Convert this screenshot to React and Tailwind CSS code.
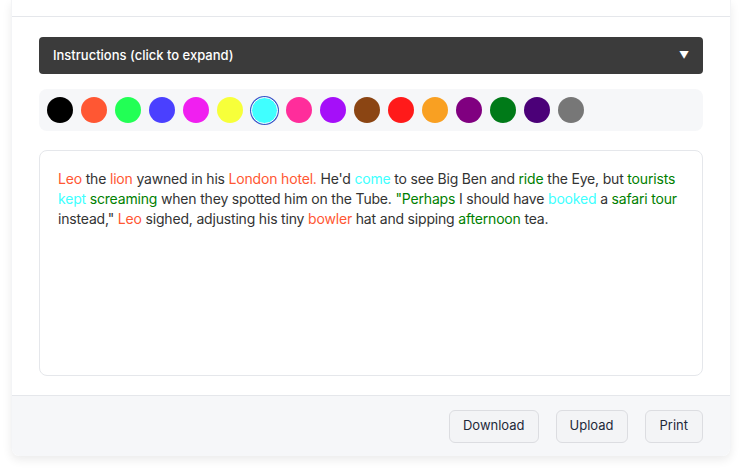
const colors = [
	"#000000", "#ff5733", "#22ff55", "#4a40ff", "#f01ff0", "#f7ff3a", "#40ffff", "#ff2d9b",
	"#a50ff9", "#8b4513", "#ff1a1a", "#f9a022", "#800080", "#007a18", "#4b0078", "#777777",
];

const words = [
	["Leo", "#ff5733"], [" the "], ["lion", "#ff5733"], [" yawned in his "], ["London hotel.", "#ff5733"],
	[" He'd "], ["come", "#40ffff"], [" to see Big Ben and "], ["ride", "#008000"], [" the Eye, but "],
	["tourists", "#008000"], [" "], ["kept", "#40ffff"], [" "], ["screaming", "#008000"],
	[" when they spotted him on the Tube. "], ["\"Perhaps", "#008000"], [" I should have "],
	["booked", "#40ffff"], [" a "], ["safari tour", "#008000"], [" instead,\" "], ["Leo", "#ff5733"],
	[" sighed, adjusting his tiny "], ["bowler", "#ff5733"], [" hat and sipping "],
	["afternoon", "#008000"], [" tea."],
];

const App = () => {
	return (
		<div className="w-[755px] h-[472px] bg-white overflow-hidden" style={{ fontFamily: "Inter, sans-serif" }}>
			<div className="ml-[11px] w-[720px] bg-white rounded-b-lg shadow-[0_4px_10px_rgba(0,0,0,0.08)] border-x border-gray-100">
				<div className="h-[17px] border-b border-gray-200"></div>
				<div className="px-[27px] pt-[20px] pb-[19px]">
					<div className="h-[37px] bg-[#3b3b3b] rounded flex items-center justify-between px-[14px] text-white">
						<span className="text-[13px] font-medium">Instructions (click to expand)</span>
						<span className="text-[10px]">▼</span>
					</div>
					<div className="mt-[15px] h-[42px] bg-[#f6f7f9] rounded-lg flex items-center gap-[8px] px-[8px]">
						{colors.map((c, i) => (
							<div
								key={i}
								className={i === 6
									? "w-[27px] h-[27px] rounded-full border-[1.5px] border-white ring-1 ring-[#3b55c8]"
									: "w-[26px] h-[26px] rounded-full"}
								style={{ backgroundColor: c }}
							></div>
						))}
					</div>
					<div className="mt-[19px] h-[226px] border border-gray-200 rounded-lg pl-[18px] pr-[14px] pt-[18px] text-[14px] leading-[20px] tracking-[-0.18px] text-[#333]">
						{words.map(([t, c], i) => (
							<span key={i} style={c ? { color: c } : undefined}>{t}</span>
						))}
					</div>
				</div>
				<div className="border-t border-gray-200 bg-[#f6f7f9] rounded-b-lg h-[61px] flex items-center justify-end gap-[17px] pr-[27px]">
					<button className="h-[33px] px-[13px] bg-[#f3f4f6] border border-[#dcdde1] rounded-md text-[13px] text-gray-800">Download</button>
					<button className="h-[33px] px-[13px] bg-[#f3f4f6] border border-[#dcdde1] rounded-md text-[13px] text-gray-800">Upload</button>
					<button className="h-[33px] px-[14px] bg-[#f3f4f6] border border-[#dcdde1] rounded-md text-[13px] text-gray-800">Print</button>
				</div>
			</div>
		</div>
	);
};

export default App;
